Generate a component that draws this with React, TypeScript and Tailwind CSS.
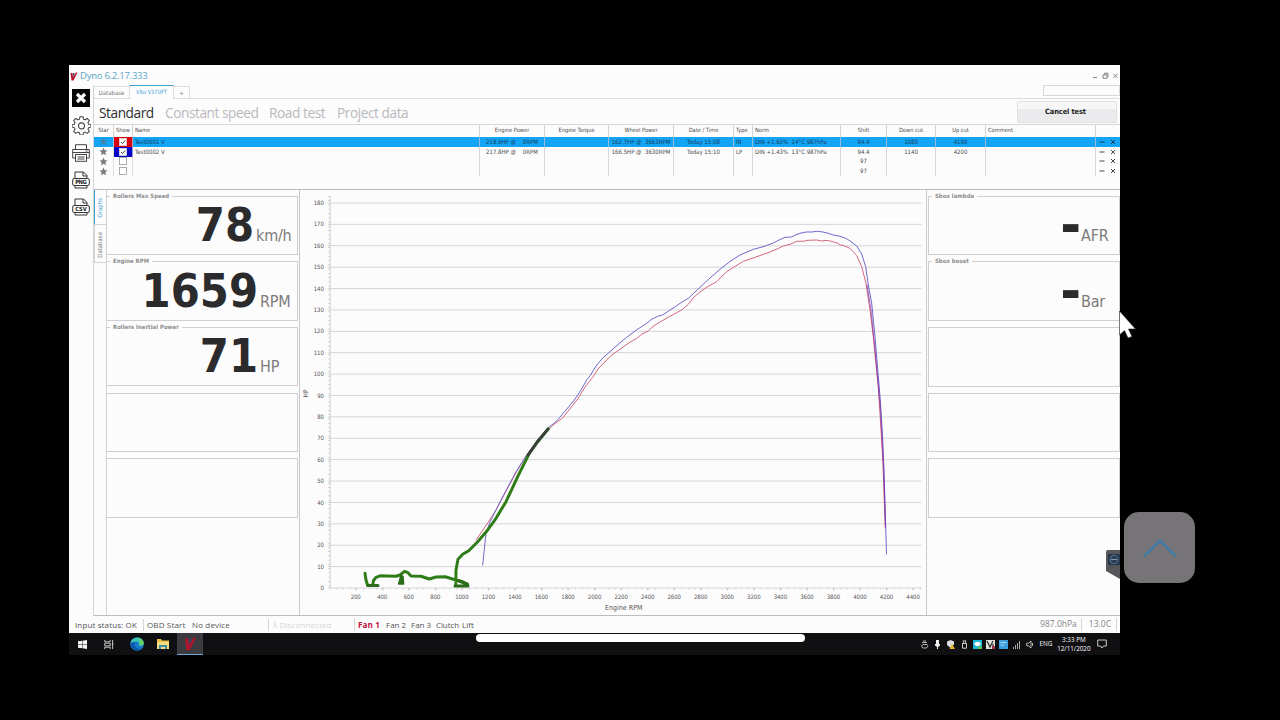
import { ChevronUp } from "lucide-react";

const TABLE_COLS =
  "grid grid-cols-[20px_19px_347px_65px_64px_65px_60px_19px_88px_46px_49px_50px_110px_22px]";

const HEADERS = [
  "Star", "Show", "Name", "Engine Power", "Engine Torque", "Wheel Power", "Date / Time",
  "Type", "Norm", "Shift", "Down cut", "Up cut", "Comment", "",
];

const LEFT_ALIGNED = [2, 7, 8, 12];

type Run = { color: string; checked: boolean; selected: boolean; cells: string[] };

const RUNS: Run[] = [
  {
    color: "bg-[#d90012]",
    checked: true,
    selected: true,
    cells: ["Test0001 V", "218.9HP @    0RPM", "", "162.7HP @  3663RPM", "Today 15:08", "IN", "DIN +1.60%  14°C 987hPa", "94.4", "1080", "4190", ""],
  },
  {
    color: "bg-[#0a06c8]",
    checked: true,
    selected: false,
    cells: ["Test0002 V", "217.8HP @    0RPM", "", "166.5HP @  3630RPM", "Today 15:10", "LP", "DIN +1.43%  13°C 987hPa", "94.4", "1140", "4200", ""],
  },
  { color: "", checked: false, selected: false, cells: ["", "", "", "", "", "", "", "97", "", "", ""] },
  { color: "", checked: false, selected: false, cells: ["", "", "", "", "", "", "", "97", "", "", ""] },
];

const BLUE_RUN =
  "482.7,565 486,533 490,522 496,510 502.7,496.7 516,471.7 526,456 537.7,440 548.3,427.7 556,421.7 561,416 574.3,400 581,390 587,379.5 590,376 596,366 602.7,358 610,351.7 618,344.5 626.7,337.3 636,330.3 646.7,323.3 652,319 658.3,316 662.7,315 670,310 675,307 680,303.3 688.3,298.3 700,287.3 710,278 720,269.3 730,261.5 740,255 747,252 753.3,249.3 764,246.5 773.3,243 779,240 785,237.3 791.7,237 796,234.6 800,233.3 806,232 812,232 816.7,231.3 823,232 828,233.2 833.3,235 840,236.3 846.7,238.7 852,242.3 856.7,246 861.7,254 865.7,266.7 868.3,285 871.7,303.3 875,336.7 880.3,400 882.7,438.3 884.3,480 885.7,526.7 886.5,554";

const RED_RUN =
  "476,540 487.7,523 496,510 509.3,485 517,471 526,456 537.7,441 548.3,430 554.3,424 562.7,418 569,410 577.7,399 585,387 592.7,377.3 598,369 606.7,360 611,355.5 620,349.3 628,343.5 636.7,338.3 642,334 648.3,331 652,327.3 656.7,324 668,317.3 681.7,310 688.3,304.3 694,297 700,292 707,287 716.7,281.7 722,276 726.7,271.7 734,267 743.3,261.3 756,257 770,252 777,249 783.3,246 790,244.3 796.7,241.3 803,241.3 808,240.3 816.7,240 821.7,241 826,240.4 831.7,241.3 838,243.3 840,245 843,245.3 850,248.3 856.7,255.7 861.7,266.7 866,283.3 870,310 873.3,336.7 878.3,386.7 881,430 883,465 885.3,528";

const LIVE_RUN =
  "M365 573.3 366 580 367.7 585.5M372.7 585 373.5 580.5 376 577.3 380 575.8 396 576.3 400 575 402 573.3 404.5 571.3 407.5 572.3 411 576 421 576.3 429.3 579 436 577 445 576.7 452.7 579 462.7 581.7 467.5 584.3M455.8 585 456 570 458 559.3 462.7 554.3 468.7 550.7 477.7 541.7 487.7 530 496 518.3 506 501.7 517.7 476.7 529.3 453.3 537.7 441.7 548.3 428.7";

const HP_STEPS = Array.from({ length: 19 }, (_, i) => i * 10);
const RPM_STEPS = Array.from({ length: 22 }, (_, i) => (i + 1) * 200);
const hpY = (hp: number) => 588 - hp * 2.139;
const rpmX = (rpm: number) => 329.2 + rpm * 0.1327;

function BrandMark({ className }: { className: string }) {
  return (
    <svg viewBox="0 0 16 18" className={className}>
      <path d="M1 2h4l1 9 6-10h3L7 17H3z" fill="#b5122c" />
      <path d="M6 2h3l-1 5-2 3z" fill="#3c4660" />
    </svg>
  );
}

function Star({ dim }: { dim: boolean }) {
  return (
    <svg viewBox="0 0 20 20" className="h-[9px] w-[9px]">
      <path d="m10 1 2.700 6 6.300.600-4.800 4.200 1.500 6.500L10 15l-5.700 3.300 1.500-6.500L1 7.600 7.300 7z" fill={dim ? "#3f83a8" : "#7a7a78"} />
    </svg>
  );
}

function CheckBox({ checked }: { checked: boolean }) {
  return (
    <svg viewBox="0 0 8 8" className="h-[8px] w-[8px]">
      <rect x=".5" y=".5" width="7" height="7" fill="#fff" stroke={checked ? "#ddd" : "#999"} strokeWidth=".8" />
      {checked && <path d="m2 4 1.500 1.600L6.200 2.400" fill="none" stroke="#333" strokeWidth=".9" />}
    </svg>
  );
}

function FileIcon({ label }: { label: string }) {
  return (
    <svg viewBox="0 0 18 18" className="h-[18px] w-[18px]" fill="none" stroke="#333" strokeWidth="1">
      <path d="M3 8V1h8.500L15 4.500V8M11 1v4h4M3 14v3h12v-3" />
      <rect x=".7" y="7.500" width="16.600" height="7" rx="1.500" fill="#fff" />
      <text x="9" y="13.200" textAnchor="middle" fontSize="5.800" fontWeight="bold" fill="#222" stroke="none" fontFamily="DejaVu Sans Condensed, sans-serif" textLength="11.500">
        {label}
      </text>
    </svg>
  );
}

function Sidebar() {
  return (
    <div className="flex w-[24px] shrink-0 flex-col items-center gap-[9px] pt-[4px]">
      <svg viewBox="0 0 18 18" className="h-[18px] w-[18px]">
        <rect width="18" height="18" fill="#050505" />
        <path d="m5 5 8 8M13 5l-8 8" stroke="#fff" strokeWidth="3.200" />
      </svg>
      <svg viewBox="0 0 24 24" className="h-[19px] w-[19px]" fill="none" stroke="#444" strokeWidth="1.300" strokeLinejoin="round">
        <path d="M10 1h4l.6 3 2 .8 2.600-1.700 2.700 2.700-1.700 2.600.8 2 3 .6v3l-3 .7-.8 2 1.700 2.600-2.700 2.700-2.600-1.700-2 .8-.6 3h-4l-.6-3-2-.8-2.600 1.700-2.700-2.700 1.700-2.600-.8-2-3-.7v-3l3-.6.8-2-1.700-2.600 2.700-2.700 2.600 1.700 2-.8z" />
        <circle cx="12" cy="12.500" r="3.800" />
      </svg>
      <svg viewBox="0 0 18 18" className="h-[18px] w-[18px]" fill="none" stroke="#444" strokeWidth="1">
        <path d="M3.500 5.500V.7h11v4.800M3.500 14H.7V5.500h16.600V14h-2.800M.7 8.500h16.600" />
        <rect x="3.500" y="10.500" width="11" height="6.800" fill="#fff" />
        <path d="M5.500 13h7M5.500 15h7M13.500 7h2" />
      </svg>
      <FileIcon label="PNG" />
      <FileIcon label="CSV" />
    </div>
  );
}

function RunTable() {
  return (
    <div className="h-[65px] border-t border-[#d6d6d9] text-[5.700px] leading-none text-[#4a4a4a]">
      <div className={`${TABLE_COLS} h-[12px]`}>
        {HEADERS.map((h, i) => (
          <div
            key={i}
            className={`flex items-center overflow-hidden whitespace-pre border-[#d3d3d6] ${LEFT_ALIGNED.includes(i) ? "pl-[2px]" : "justify-center"} ${i === 13 ? "" : "border-r"}`}
          >
            {h}
          </div>
        ))}
      </div>
      {RUNS.map((run, r) => (
        <div key={r} className={`${TABLE_COLS} h-[9.800px] text-[6px] ${run.selected ? "bg-[#14a4f5] text-[#123c5c]" : ""}`}>
          <div className="flex items-center justify-center border-r border-[#d3d3d6]/70">
            <Star dim={run.selected} />
          </div>
          <div className={`flex items-center justify-center border-r border-[#d3d3d6]/70 ${run.color}`}>
            <CheckBox checked={run.checked} />
          </div>
          {run.cells.map((cell, i) => (
            <div
              key={i}
              className={`flex items-center overflow-hidden whitespace-pre border-r border-[#c8c8cc]/70 ${LEFT_ALIGNED.includes(i + 2) ? "pl-[2px]" : "justify-center"}`}
            >
              {cell}
            </div>
          ))}
          <div className="flex items-center justify-around">
            <svg viewBox="0 0 6 6" className="h-[6px] w-[6px]" stroke="currentColor" strokeWidth="1">
              <path d="M.5 3h5" />
            </svg>
            <svg viewBox="0 0 6 6" className="h-[6px] w-[6px]" stroke="currentColor" strokeWidth="1">
              <path d="m1 1 4 4M5 1 1 5" />
            </svg>
          </div>
        </div>
      ))}
    </div>
  );
}

function Gauge({ title, value, unit, unitWidth }: { title: string; value: string; unit: string; unitWidth: string }) {
  return (
    <fieldset className="-ml-px mb-[3px] h-[62.500px] w-[192px] shrink-0 border border-[#cfcfd2] pl-[3px]">
      <legend className="px-[3px] text-[5.900px] font-bold leading-[7px] tracking-[0.050px] text-[#8c8c8c]">{title}</legend>
      <div className="flex items-baseline justify-end pt-[2.500px] leading-none">
        <span className={`text-[46.500px] font-bold leading-[47px] text-[#2b2a2c] ${value === "-" ? "inline-block scale-[1.2]" : ""}`}>
          {value}
        </span>
        <span className={`${unitWidth} pl-[2px] text-[16px] tracking-[-0.200px] text-[#7b7b7b]`}>{unit}</span>
      </div>
    </fieldset>
  );
}

function EmptyGauge() {
  return <div className="-ml-px mb-[2.500px] mt-[3.500px] h-[59.500px] w-[192px] shrink-0 border border-[#cfcfd2]" />;
}

function DynoChart() {
  return (
    <svg viewBox="299 190 628 425" className="h-[425px] w-[628px] shrink-0" fontFamily="DejaVu Sans Condensed, sans-serif" fill="#555">
      <path d="M299.500 190V615M926.500 190V615" stroke="#c9c9cc" />
      {HP_STEPS.map((hp) => (
        <g key={hp}>
          <path d={`M328 ${hpY(hp)}H921.500`} stroke="#d5d5d8" strokeWidth="1" />
          <text x="324" y={hpY(hp) + 2.1} textAnchor="end" fontSize="6">{hp}</text>
        </g>
      ))}
      <path d="M330.200 196V588" stroke="#d0d0d4" />
      <path d="M329 196V588" stroke="#c6c6ca" strokeWidth="2" strokeDasharray=".7 3.580" />
      <path d="M330 588.800H921" stroke="#c6c6ca" strokeWidth="1.500" strokeDasharray=".7 5.930" />
      {RPM_STEPS.map((rpm) => (
        <g key={rpm}>
          <path d={`M${rpmX(rpm)} 588v2.500`} stroke="#b5b5ba" strokeWidth=".8" />
          <text x={rpmX(rpm)} y="598.800" textAnchor="middle" fontSize="6" textLength={rpm < 1000 ? 10 : 13.5}>{rpm}</text>
        </g>
      ))}
      <text x="605" y="609.500" fontSize="7" textLength="37.500">Engine RPM</text>
      <text x="0" y="0" fontSize="6.500" transform="translate(308 397.500) rotate(-90)">HP</text>
      <g fill="none" strokeLinejoin="round" strokeLinecap="round">
        <polyline points={RED_RUN} stroke="#d4687c" strokeWidth="1" />
        <polyline points={BLUE_RUN} stroke="#7069cc" strokeWidth="1" />
        <path d="m867 285 4 25 4 40 5.500 60 3 55 2 62" stroke="#7a1fa0" strokeWidth="1.200" opacity=".6" />
        <path d={LIVE_RUN} stroke="#2f7d18" strokeWidth="3" />
        <path d="m528 455 9.700-13.800 10.300-12" stroke="#3a3f3c" strokeWidth="2.800" />
        <path d="M368 585.500h10M455 586h13M459 581l8 3" stroke="#2c6b1b" strokeWidth="3" />
        <path d="m401 575 2 1.500.600 7.500h-5z" fill="#2c6b1b" stroke="#2c6b1b" strokeWidth="1.500" />
      </g>
    </svg>
  );
}

function StatusBar() {
  return (
    <div className="flex h-[17px] items-center text-[8px] text-[#555] [font-family:'Open_Sans','Noto_Sans',sans-serif]">
      <span className="w-[75px] border-r border-[#d5d5d5] pl-[6px] tracking-[0.130px]">Input status: OK</span>
      <span className="w-[45px] pl-[3px] tracking-[0.150px]">OBD Start</span>
      <span className="w-[80px] border-r border-[#d5d5d5] pl-[3px] tracking-[0.150px]">No device</span>
      <span className="w-[86px] border-r border-[#d5d5d5] pl-[4px] tracking-[0.100px] text-[#d5d5d8]">λ Disconnected</span>
      <span className="w-[31px] pl-[3px] font-bold tracking-[0.150px] text-[#bd1238]">Fan 1</span>
      <span className="w-[25px]">Fan 2</span>
      <span className="w-[25px]">Fan 3</span>
      <span className="w-[26px] tracking-[-0.100px]">Clutch</span>
      <span>Lift</span>
      <span className="ml-auto border-r border-[#d5d5d5] pr-[4px] text-[8.500px] text-[#858585]">987.0hPa</span>
      <span className="mr-[3px] border-r border-[#d5d5d5] px-[5px] pl-[7px] text-[8.500px] text-[#858585]">13.0C</span>
    </div>
  );
}

function Taskbar() {
  return (
    <div className="flex h-[22px] w-[1051px] items-center bg-[#101012] text-white">
      <svg viewBox="0 0 10 10" className="ml-[9px] h-[9px] w-[9px]" fill="#f4f4f4">
        <path d="M0 1.500 4.500.8v3.900H0zM5 .7 10 0v4.700H5zM0 5.200h4.500v3.900L0 8.500zM5 5.200h5V10l-5-.7z" />
      </svg>
      <svg viewBox="0 0 11 10" className="ml-[17px] h-[9px] w-[10px]" fill="none" stroke="#d5d5d5">
        <path d="M.8 0v2h6V0M.8 10V8h6v2M.8 3.500h6v3h-6zM9.500 0v10M8.500 4.500h2" />
      </svg>
      <svg viewBox="0 0 14 14" className="ml-[16px] h-[14px] w-[14px]">
        <circle cx="7" cy="7" r="6.800" fill="#1479cf" />
        <path d="M.5 6C2-1 13-1 13.700 6c.2 3-4 3.500-5 2 1.500-2-1-4-3.500-3.300C3.200 5 1.200 5 .5 6z" fill="#3fc5b0" />
        <path d="M9 .8c3 1 4.700 3 4.700 5.200.2 2-2.700 3-4.500 2.400C10.500 5.500 10 3 9 .8z" fill="#63d268" />
        <path d="M5.200 5C3 8 5.500 12.500 11 11.500 6 15.500 1 12 .8 8 1.500 5.500 3.500 4.500 5.200 5z" fill="#0b58a8" />
      </svg>
      <svg viewBox="0 0 12 10" className="ml-[13px] h-[10px] w-[12px]">
        <path d="M0 0h4l1 1.500h7V10H0z" fill="#eebf45" />
        <path d="M0 3h12v7H0z" fill="#f7dc80" />
        <path d="M2 6h8v4H8V8H4v2H2z" fill="#3f8ea0" />
      </svg>
      <div className="ml-[8px] flex h-[22px] w-[26px] items-center justify-center border-b border-[#6ea8d8] bg-[#3b3b40]">
        <BrandMark className="h-[14px] w-[13px]" />
      </div>
      <div className="mb-[12px] ml-[273px] h-[8px] w-[329px] rounded-full bg-white" />
      <div className="ml-[115px] flex items-center gap-[4.200px]">
        <svg viewBox="0 0 9 9" className="h-[9px] w-[9px]" fill="none" stroke="#ccc" strokeWidth=".9">
          <path d="M2 2.500h5M3 1h3M7 4.500H3.200a1.800 1.800 0 0 0 0 3.500h2.600A2 2 0 0 0 7 4.500z" />
        </svg>
        <svg viewBox="0 0 9 9" className="h-[9px] w-[9px]" fill="#eee">
          <path d="M3 0h3v5.500H3zM2 4h5v1.500L5 7v2H4V7L2 5.500z" />
        </svg>
        <svg viewBox="0 0 9 9" className="h-[9px] w-[9px]">
          <path d="M1 1.500 4.500 0 8 1.500v3L4.500 8 1 5z" fill="#ddd" />
          <path d="m6 4 3 5H3.500z" fill="#e5b72a" />
        </svg>
        <svg viewBox="0 0 9 9" className="h-[9px] w-[9px]" fill="none" stroke="#ddd" strokeWidth=".9">
          <path d="M2.500 3.500h4v4.700h-4zM3.300 3.500V.8h2.400v2.700" />
        </svg>
        <svg viewBox="0 0 9 9" className="h-[9px] w-[9px]">
          <path d="M0 0h9v9H0z" fill="#20b8d8" />
          <path d="M1 3.500 3 2h3l2 1.500L6 6H3z" fill="#fff" />
          <path d="M5 6.500h4V9H5z" fill="#62c54d" />
        </svg>
        <svg viewBox="0 0 9 9" className="h-[9px] w-[9px]">
          <path d="M0 0h9v9H0z" fill="#e3e3dc" />
          <path d="m1 1 3 6 3-6M7 4v4" stroke="#333" strokeWidth="1.300" fill="none" />
          <path d="M6 6h3v3H6z" fill="#a63246" />
        </svg>
        <svg viewBox="0 0 9 9" className="h-[9px] w-[9px]">
          <path d="M0 0h9v9H0z" fill="#3d9fe0" />
          <path d="M1.500 2.500h6M1.500 5h4" stroke="#a8daf8" />
        </svg>
        <svg viewBox="0 0 9 9" className="h-[9px] w-[9px]" stroke="#aaa" strokeWidth="1">
          <path d="M1.500 9V7M3.500 9V5M5.500 9V3M7.500 9V1" />
        </svg>
        <svg viewBox="0 0 9 9" className="h-[9px] w-[9px]" fill="none" stroke="#ccc" strokeWidth=".9">
          <path d="M.8 3.200h1.700L5 1v7L2.500 5.800H.8zM6.500 3v3" />
        </svg>
      </div>
      <span className="ml-[5px] text-[6.300px] [font-family:'Open_Sans',sans-serif]">ENG</span>
      <div className="ml-[5px] flex w-[33px] flex-col items-center text-[6.300px] leading-[9px] [font-family:'Open_Sans',sans-serif]">
        <span className="whitespace-nowrap">3:33 PM</span>
        <span className="whitespace-nowrap">12/11/2020</span>
      </div>
      <svg viewBox="0 0 10 10" className="ml-[7px] h-[10px] w-[10px]" fill="none" stroke="#ddd" strokeWidth=".9">
        <path d="M.7 1h8.600v6H6.500L5 9 3.500 7H.7z" />
      </svg>
    </div>
  );
}

export default function App() {
  return (
    <div className="relative h-[720px] w-[1280px] overflow-hidden bg-black pl-[69px] pt-[65px] [font-family:'DejaVu_Sans_Condensed','DejaVu_Sans',sans-serif]">
      <div className="flex h-[568px] w-[1051px] flex-col bg-[#fdfcfd]">
        {/* title bar */}
        <div className="flex h-[20px] shrink-0 items-center pl-[1px] pr-[1px] pt-[2px]">
          <BrandMark className="h-[9px] w-[8px]" />
          <span className="ml-[2px] text-[9.500px] leading-none tracking-[-0.250px] text-[#58a5c6] [font-family:'Open_Sans',sans-serif]">Dyno 6.2.17.333</span>
          <svg viewBox="0 0 28 8" className="ml-auto h-[8px] w-[28px]" fill="none" stroke="#777" strokeWidth=".9">
            <path d="M2 5.500h4M12 2.800h4v3.500h-4zM13.500 2.800V1.200H17v3.500h-1M22.500 1.800l4 4M26.500 1.800l-4 4" />
          </svg>
        </div>

        <div className="flex h-[531px] shrink-0">
          <Sidebar />
          <div className="flex w-[1027px] flex-col border-l border-[#d4d4d8]">
            {/* document tabs */}
            <div className="flex h-[14px] items-end border-b border-[#dcdcdf] text-[6px] leading-none text-[#777]">
              <div className="flex h-[12px] w-[35px] items-center justify-center border-t border-[#dcdcdf]">Database</div>
              <div className="-mb-px flex h-[14px] w-[45px] items-center justify-center border-x border-t border-x-[#dcdcdf] border-t-[#3e9fd2] bg-[#fdfcfd] text-[5.900px] tracking-[-0.100px] text-[#4aa6d4]">
                Vito V370FT
              </div>
              <div className="flex h-[12px] w-[16px] items-center justify-center border-r border-t border-[#dcdcdf]">+</div>
              <div className="mb-[2px] ml-auto h-[11px] w-[77px] border border-[#d8d8db]" />
            </div>

            {/* test modes */}
            <div className="flex h-[25px] items-center pl-[5px] text-[13.700px] leading-none tracking-[-0.450px] text-[#b9b9bc] [font-family:'Open_Sans','Noto_Sans',sans-serif]">
              <span className="w-[66px] pt-[3px] text-[#2d2d2d]">Standard</span>
              <span className="w-[104px] whitespace-nowrap pt-[3px]">Constant speed</span>
              <span className="w-[68px] whitespace-nowrap pt-[3px]">Road test</span>
              <span className="whitespace-nowrap pt-[3px]">Project data</span>
              <button className="ml-auto mr-[3px] flex h-[22px] w-[100px] items-center justify-center rounded-[1px] border border-[#e0e0e2] bg-linear-to-b from-[#f6f6f7] from-35% to-[#ebebed] to-36% pr-[3px] pt-[1px] text-[7.300px] font-bold tracking-[-0.050px] text-[#222] [font-family:'DejaVu_Sans_Condensed',sans-serif]">
                Cancel test
              </button>
            </div>

            <RunTable />

            <div className="flex h-[427px] border-y border-[#bdbdc0]">
              {/* vertical page tabs */}
              <div className="flex w-[12px] shrink-0 flex-col text-[6px] leading-none text-[#777]">
                <div className="flex h-[34px] items-center justify-center border-l border-[#3e9fd2] pr-[2px] pt-[2px]">
                  <span className="rotate-180 text-[#4aa6d4] [writing-mode:vertical-rl]">Graphs</span>
                </div>
                <div className="flex h-[39px] items-center justify-center border-y border-l border-[#d4d4d8] pr-[2px] pt-[2px]">
                  <span className="rotate-180 [writing-mode:vertical-rl]">Database</span>
                </div>
              </div>

              <div className="flex w-[193px] shrink-0 flex-col border-l border-[#d4d4d8] pt-[2.500px]">
                <Gauge title="Rollers Max Speed" value="78" unit="km/h" unitWidth="w-[43px]" />
                <Gauge title="Engine RPM" value="1659" unit="RPM" unitWidth="w-[39px]" />
                <Gauge title="Rollers Inertial Power" value="71" unit="HP" unitWidth="w-[39px]" />
                <EmptyGauge />
                <EmptyGauge />
              </div>

              <DynoChart />

              <div className="ml-[2px] flex w-[191px] shrink-0 flex-col pt-[2.500px]">
                <Gauge title="Sbox lambda" value="-" unit="AFR" unitWidth="w-[40px]" />
                <Gauge title="Sbox boost" value="-" unit="Bar" unitWidth="w-[40px]" />
                <EmptyGauge />
                <EmptyGauge />
                <EmptyGauge />
              </div>
            </div>
          </div>
        </div>

        <StatusBar />
      </div>

      <Taskbar />

      {/* docked remote-control handle */}
      <svg viewBox="0 0 14 29" className="absolute left-[1106px] top-[550px] h-[29px] w-[14px]">
        <path d="M1 0h13v29L0 21V2z" fill="#56565b" />
        <rect x="2" y="4" width="12" height="11" rx="1" fill="#27364a" />
        <circle cx="8" cy="9.500" r="4" fill="none" stroke="#54718e" strokeWidth="1.200" />
        <path d="M5 9.500h6" stroke="#7f9ab2" strokeWidth="1.200" />
      </svg>

      <svg viewBox="0 0 18 30" className="absolute left-[1118px] top-[309px] h-[30px] w-[18px]">
        <path d="M1.500 2v24l5-4.500 3.500 7.500 4-1.500-3.500-7.500h7z" fill="#fff" stroke="#222" strokeWidth=".6" />
      </svg>

      <button className="absolute left-[1124px] top-[512px] flex h-[71px] w-[71px] items-center justify-center rounded-[15px] bg-[#777477]">
        <ChevronUp className="h-[60px] w-[62px] text-[#437c9f]" strokeWidth={1.2} />
      </button>
    </div>
  );
}
